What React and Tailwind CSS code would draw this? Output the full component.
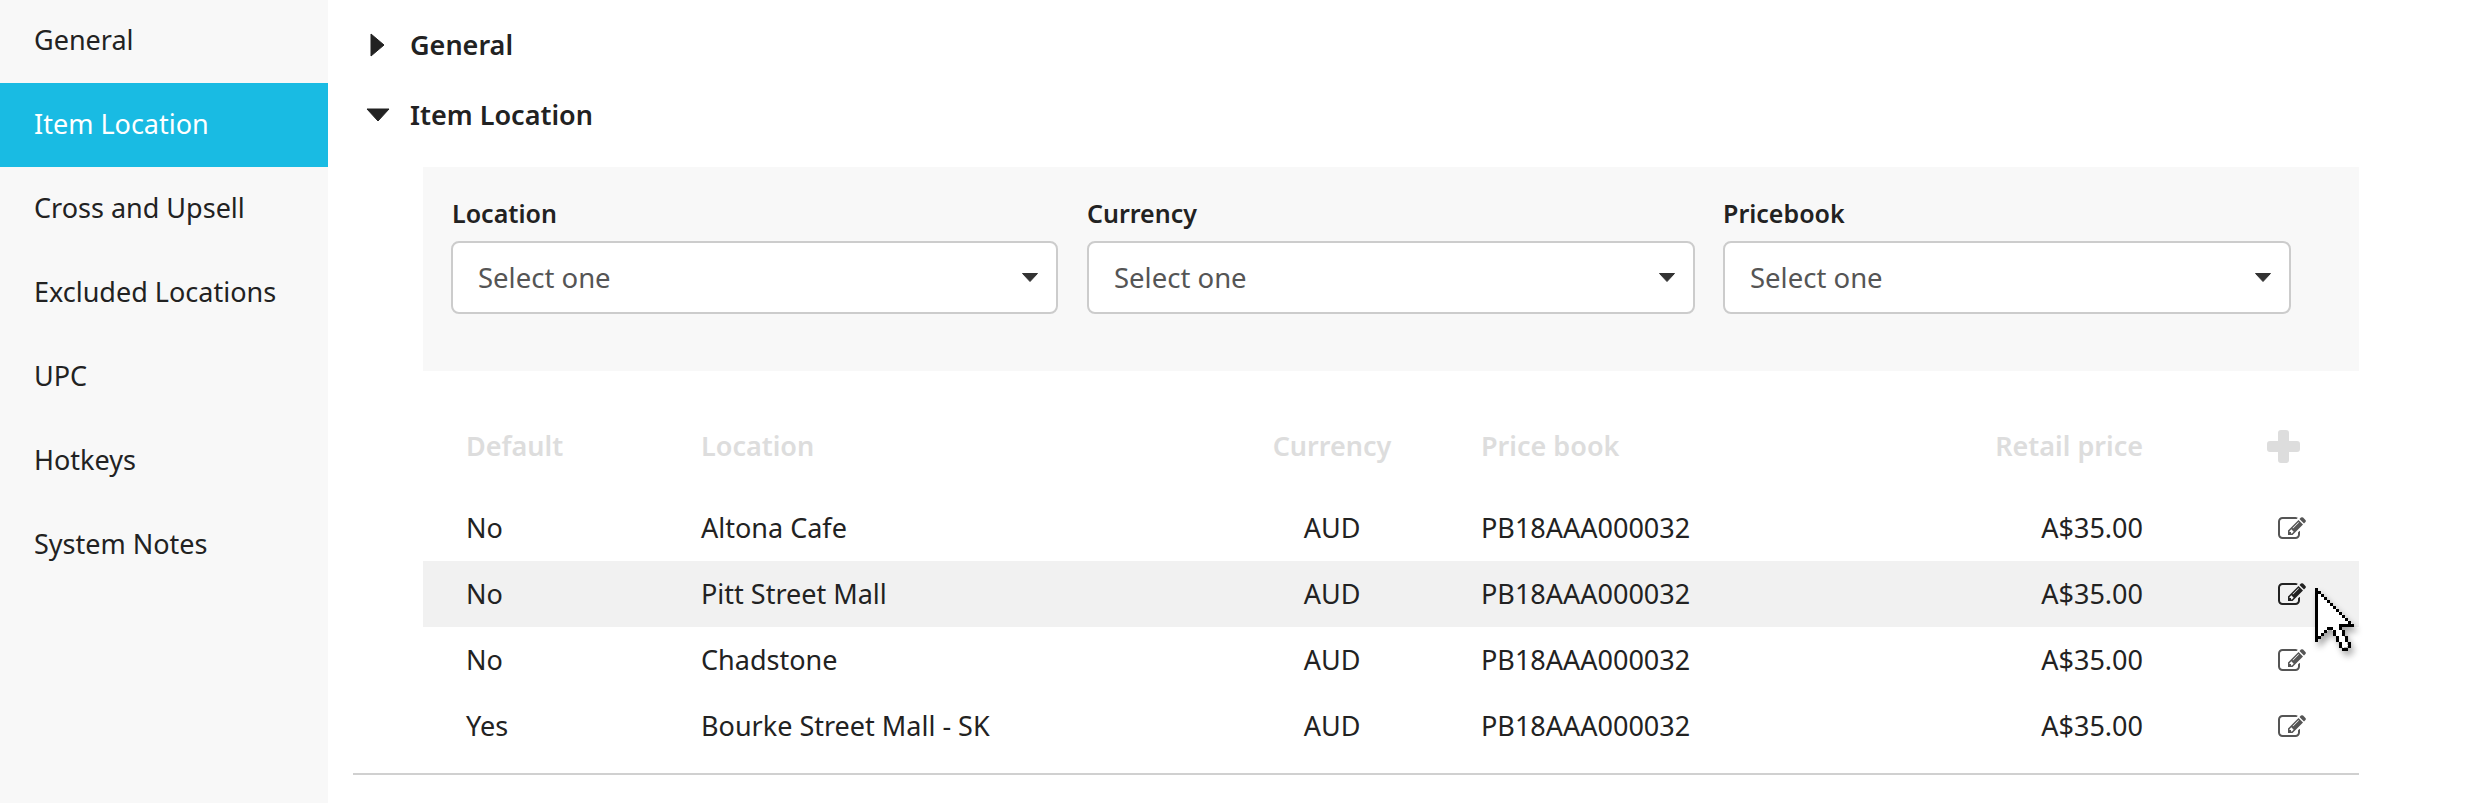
import React from "react";

const nav = ["General", "Item Location", "Cross and Upsell", "Excluded Locations", "UPC", "Hotkeys", "System Notes"];
const rows = [
  ["No", "Altona Cafe"],
  ["No", "Pitt Street Mall"],
  ["No", "Chadstone"],
  ["Yes", "Bourke Street Mall - SK"],
];
const selects = [
  ["Location", "w-[607px]", "pl-[1px]"],
  ["Currency", "w-[608px]", ""],
  ["Pricebook", "w-[568px] -ml-[1px]", ""],
];
const cols = "grid grid-cols-[235px_482px_298px_662px_214px] items-center pl-[43px]";

const cursorDots = [
  ...Array.from({ length: 11 }, (_, i) => [3 + 3 * i, 3 + 3 * i]),
  [24, 36], [27, 36], [30, 36], [33, 36], [36, 36],
  [3, 48], [6, 45], [9, 42], [12, 39], [15, 39],
  [18, 42], [18, 45], [21, 48], [21, 51], [24, 54], [24, 57], [27, 60],
  [24, 39], [27, 42], [27, 45], [30, 48], [30, 51], [33, 54], [33, 57], [30, 60],
];

function Cursor() {
  return (
    <svg className="absolute left-[2315px] top-[588px] drop-shadow-[3px_5px_3px_rgba(0,0,0,0.35)]" width="42" height="66" viewBox="0 0 42 66" shapeRendering="crispEdges">
      <path d="M0 0L38 36H24L33 58L28 60L16 40L3 50Z" fill="#fff" />
      <rect x="0" y="0" width="3" height="54" fill="#000" />
      {cursorDots.map(([x, y]) => (
        <rect key={`${x}-${y}`} x={x} y={y} width="3" height="3" fill="#000" />
      ))}
    </svg>
  );
}

function EditIcon({ className }) {
  return (
    <svg className={`block ${className}`} width="28" height="22" viewBox="0 128 1792 1408" fill="currentColor">
      <path d="M888 1184l116-116-152-152-116 116v56h96v96h56zm440-720q-16-16-33 1l-350 350q-17 17-1 33t33-1l350-350q17-17 1-33zm80 594v190q0 119-84.5 203.5t-203.5 84.5h-832q-119 0-203.5-84.5t-84.5-203.5v-832q0-119 84.5-203.5t203.5-84.5h832q63 0 117 25 15 7 18 23 3 17-9 29l-49 49q-14 14-32 8-23-6-45-6h-832q-66 0-113 47t-47 113v832q0 66 47 113t113 47h832q66 0 113-47t47-113v-126q0-13 9-22l64-64q15-15 35-7t20 29zm-96-738l288 288-672 672h-288v-288zm444 132l-92 92-288-288 92-92q28-28 68-28t68 28l152 152q28 28 28 68t-28 68z" />
    </svg>
  );
}

export default function App() {
  return (
    <div className="relative flex min-h-[803px] w-[2472px] overflow-hidden bg-white font-['Noto_Sans',sans-serif] text-[#222]">
      <aside className="w-[328px] shrink-0 bg-[#f8f8f8]">
        {nav.map((n, i) => (
          <div key={n} className={`flex items-center pl-[34px] pb-[2px] text-[27px] ${i === 0 ? "h-[83px]" : "h-[84px]"} ${i === 1 ? "bg-[#19bbe3] text-white" : ""}`}>
            {n}
          </div>
        ))}
      </aside>
      <main className="ml-[25px] w-[2006px]">
        <div className="mt-[10px] flex h-[70px] items-center text-[27px] font-semibold">
          <svg className="ml-[17px] mr-[25px]" width="15" height="24" viewBox="0 0 15 24"><path d="M1 1L14 12L1 23Z" fill="#222" stroke="#222" strokeLinejoin="round" /></svg>
          General
        </div>
        <div className="flex h-[70px] items-center text-[27px] font-semibold">
          <svg className="ml-[13px] mr-[20px]" width="24" height="14" viewBox="0 0 24 14"><path d="M1 1H23L12 13Z" fill="#222" stroke="#222" strokeLinejoin="round" /></svg>
          Item Location
        </div>
        <section className="ml-[70px] mt-[17px] h-[204px] bg-[#f8f8f8] pl-[28px] pt-[27px]">
          <div className="flex gap-[29px]">
            {selects.map(([l, w, p]) => (
              <div key={l} className={w}>
                <div className={`mb-[9px] h-[38px] text-[25px] font-semibold leading-[38px] ${p}`}>{l}</div>
                <div className="flex h-[73px] items-center justify-between rounded-[8px] border-2 border-[#ccc] bg-white pl-[25px] pr-[18px] text-[27.5px] text-[#555]">
                  Select one
                  <svg width="16" height="9" viewBox="0 0 16 9"><path d="M0.5 0.5H15.5L8 8.5Z" fill="#333" stroke="#333" strokeLinejoin="round" /></svg>
                </div>
              </div>
            ))}
          </div>
        </section>
        <div className="ml-[70px]">
          <div className={`${cols} mb-[16px] mt-[42px] h-[66px] text-[27px] font-semibold text-[#ddd]`}>
            <div>Default</div>
            <div>Location</div>
            <div className="text-center">Currency</div>
            <div className="flex justify-between"><span>Price book</span><span>Retail price</span></div>
            <div className="pl-[124px]">
              <svg className="block" width="33" height="33" viewBox="0 0 33 33"><path d="M11 3a3 3 0 0 1 3-3h5a3 3 0 0 1 3 3v8h8a3 3 0 0 1 3 3v5a3 3 0 0 1-3 3h-8v8a3 3 0 0 1-3 3h-5a3 3 0 0 1-3-3v-8H3a3 3 0 0 1-3-3v-5a3 3 0 0 1 3-3h8z" fill="#ddd" /></svg>
            </div>
          </div>
          {rows.map(([d, l], i) => (
            <div key={l} className={`${cols} h-[66px] text-[27px] ${i === 1 ? "bg-[#f1f1f1]" : ""}`}>
              <div>{d}</div>
              <div>{l}</div>
              <div className="text-center">AUD</div>
              <div className="flex justify-between"><span>PB18AAA000032</span><span>A$35.00</span></div>
              <div className="pl-[135px]">
                <EditIcon className={i === 1 ? "text-[#222]" : "text-[#555]"} />
              </div>
            </div>
          ))}
        </div>
        <div className="mt-[14px] h-[2px] bg-[#d0d0d0]" />
      </main>
      <Cursor />
    </div>
  );
}
